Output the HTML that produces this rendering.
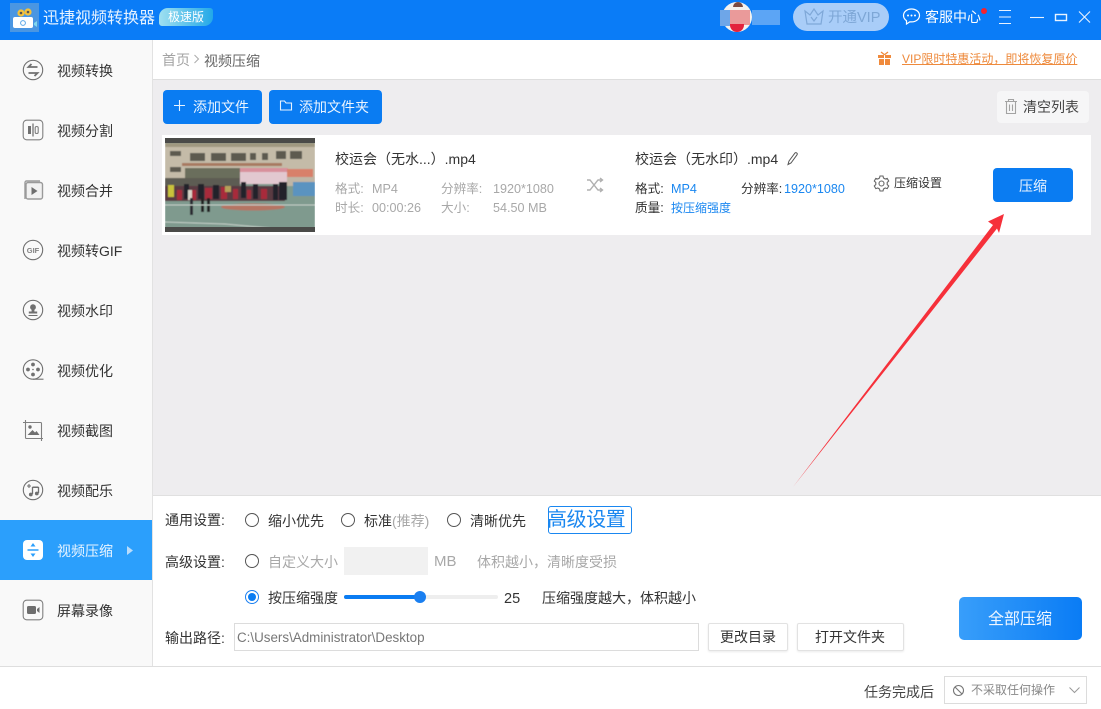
<!DOCTYPE html>
<html lang="zh"><head><meta charset="utf-8"><title>迅捷视频转换器</title>
<style>
html,body{margin:0;padding:0;background:#fff}
#r{position:relative;width:1101px;height:709px;overflow:hidden;background:#fff;font-family:"Liberation Sans","Noto Sans CJK SC",sans-serif;font-size:14px;color:#333}
#r div,#r span.t,#r svg{position:absolute}
.t{position:absolute;white-space:nowrap;line-height:18px}
.g{color:#a8a8a8}.b{color:#1a87f0}
.m{font-size:12.6px}
.nav{left:57px;color:#333}
.btn{background:#0a7cf2;border-radius:4px;color:#fff}
.wb{background:#fff;border:1px solid #e2e2e2;border-radius:2px;box-shadow:0 1px 2px rgba(0,0,0,.08);box-sizing:border-box}
.rad{width:14px;height:14px;border:1.3px solid #555;border-radius:50%;box-sizing:border-box;background:#fff}
</style></head><body><div id="r">

<!-- title bar -->
<div style="left:0;top:0;width:1101px;height:40px;background:#0a7cf7"></div>
<div style="left:10px;top:3px;width:29px;height:29px;background:#4a96e2"></div>
<svg style="left:10px;top:3px" width="30" height="30" viewBox="0 0 30 30"><circle cx="11" cy="10" r="3.6" fill="#f4c23c"/><circle cx="18" cy="9" r="3.6" fill="#f4c23c"/><circle cx="11" cy="10" r="1.3" fill="#555"/><circle cx="18" cy="9" r="1.3" fill="#555"/><rect x="3" y="14" width="20" height="11" rx="2" fill="#fff"/><path d="M24 20l3-2v6l-3-2z" fill="#7fd6ee"/><circle cx="13" cy="20" r="2.4" fill="none" stroke="#5aa7e8"/></svg>
<span class="t" style="left:43px;top:8px;font-size:16px;line-height:22px;color:#e6f2ff">迅捷视频转换器</span>
<div style="left:159px;top:8px;width:54px;height:18px;border-radius:9px 3px 9px 3px;background:linear-gradient(90deg,#9fe0f0,#23a8e8)"></div>
<span class="t" style="left:168px;top:8px;font-size:12px;line-height:18px;color:#fff">极速版</span>

<div style="left:722px;top:2px;width:30px;height:30px;border-radius:50%;background:#f4f2ef;overflow:hidden"></div>
<div style="left:730px;top:10px;width:20px;height:15px;background:#ea9a9a"></div>
<div style="left:730px;top:24px;width:14px;height:8px;background:#e3223c;border-radius:0 0 8px 8px"></div>
<div style="left:733px;top:2px;width:10px;height:5px;background:#7a4a42;border-radius:5px 5px 0 0"></div>
<div style="left:720px;top:10px;width:10px;height:16px;background:#6ea6e8"></div>
<div style="left:752px;top:10px;width:28px;height:15px;background:#5ca5f5"></div>

<div style="left:793px;top:3px;width:96px;height:28px;border-radius:14px;background:#a9cdf8"></div>
<svg style="left:803px;top:7px" width="22" height="20" viewBox="0 0 22 20"><path d="M2 4l5 4 4-6 4 6 5-4-2 13H4zM8 10l3 4 3-4" fill="none" stroke="#7fa8d8" stroke-width="1.2"/></svg>
<span class="t" style="left:828px;top:9px;font-size:14.5px;color:#7ea7d6">开通VIP</span>

<svg style="left:902px;top:7px" width="19" height="19" viewBox="0 0 19 19"><path d="M9.5 2C5 2 1.500 4.800 1.500 8.500c0 2.200 1.200 4 3 5.200V17l3.400-2.200c.5.1 1 .1 1.600.1 4.500 0 8-2.800 8-6.400S14 2 9.500 2z" fill="none" stroke="#fff" stroke-width="1.2"/><circle cx="6" cy="8.500" r="1" fill="#fff"/><circle cx="9.500" cy="8.500" r="1" fill="#fff"/><circle cx="13" cy="8.500" r="1" fill="#fff"/></svg>
<span class="t" style="left:925px;top:8px;color:#fff">客服中心</span>
<div style="left:981px;top:8px;width:6px;height:6px;border-radius:50%;background:#f5222d"></div>
<svg style="left:995px;top:8px" width="106" height="20" viewBox="0 0 106 20" fill="none" stroke="#e8f2ff" stroke-width="1.1"><path d="M4 2.500h12M4 9h12M4 15.500h12"/><path d="M35 9.500h14"/><rect x="60.500" y="6.500" width="11" height="6" stroke-width="1.400"/><path d="M84 3.500l11 11M95 3.500l-11 11"/></svg>

<!-- sidebar -->
<div style="left:0;top:40px;width:152px;height:626px;background:#f9f9f9"></div>
<div style="left:152px;top:40px;width:1px;height:626px;background:#e2e2e2"></div>

<svg style="left:22px;top:59px" width="22" height="22" viewBox="0 0 22 22" fill="none" stroke="#707070" stroke-width="1.1"><circle cx="11" cy="11" r="9.700"/><path d="M15.500 8H6.500l3-3M6.500 14h9l-3 3" stroke-width="1.800"/></svg>
<span class="t nav" style="top:62px">视频转换</span>

<svg style="left:22px;top:119px" width="22" height="22" viewBox="0 0 22 22" fill="none" stroke="#808080" stroke-width="1.1"><rect x="1.200" y="1.200" width="19.600" height="19.600" rx="3.500"/><rect x="6" y="7" width="3" height="8" fill="#707070" stroke="none"/><path d="M11 4.500v13" stroke-width="1.400"/><rect x="13.200" y="7.500" width="3" height="7" rx="1.400"/></svg>
<span class="t nav" style="top:122px">视频分割</span>

<svg style="left:22px;top:179px" width="22" height="22" viewBox="0 0 22 22" fill="none" stroke="#9a9a9a" stroke-width="1.4"><path d="M3 20V3.500A1.500 1.500 0 0 1 4.500 2H18"/><rect x="4" y="3.500" width="16.500" height="16.500" rx="2" fill="#f1f1f1"/><path d="M9.500 8l6 4-6 4z" fill="#6e6e6e" stroke="none"/></svg>
<span class="t nav" style="top:182px">视频合并</span>

<svg style="left:22px;top:239px" width="22" height="22" viewBox="0 0 22 22" fill="none" stroke="#707070" stroke-width="1.1"><circle cx="11" cy="11" r="9.700"/><text x="11" y="14" text-anchor="middle" font-family="Liberation Sans" font-weight="700" font-size="7.500" fill="#808080" stroke="none">GIF</text></svg>
<span class="t nav" style="top:242px">视频转GIF</span>

<svg style="left:22px;top:299px" width="22" height="22" viewBox="0 0 22 22" fill="none" stroke="#707070" stroke-width="1.1"><circle cx="11" cy="11" r="9.700"/><circle cx="11" cy="8.200" r="2.900" fill="#707070" stroke="none"/><path d="M9.600 10h2.800v2.500h2.800v2H6.800v-2h2.800zM6.500 16h9v1h-9z" fill="#707070" stroke="none"/></svg>
<span class="t nav" style="top:302px">视频水印</span>

<svg style="left:22px;top:359px" width="22" height="22" viewBox="0 0 22 22" fill="none" stroke="#707070" stroke-width="1.1"><circle cx="11" cy="10.500" r="9.700"/><path d="M11 20.200h10.500"/><g fill="#707070" stroke="none"><circle cx="11" cy="5.500" r="1.900"/><circle cx="11" cy="15.500" r="1.900"/><circle cx="6" cy="10.500" r="1.900"/><circle cx="16" cy="10.500" r="1.900"/><circle cx="11" cy="10.500" r=".8"/></g></svg>
<span class="t nav" style="top:362px">视频优化</span>

<svg style="left:22px;top:419px" width="22" height="22" viewBox="0 0 22 22" fill="none" stroke="#808080" stroke-width="1.1"><path d="M3.500 1v17.500a1 1 0 0 0 1 1H21M1 3.500h17.500a1 1 0 0 1 1 1V22"/><circle cx="8" cy="8" r="1.700" fill="#707070" stroke="none"/><path d="M5.500 16l5-5 2.500 2.500 1.500-1.500 3 4z" fill="#707070" stroke="none"/></svg>
<span class="t nav" style="top:422px">视频截图</span>

<svg style="left:22px;top:479px" width="22" height="22" viewBox="0 0 22 22" fill="none" stroke="#707070" stroke-width="1.1"><circle cx="11" cy="11" r="9.700"/><path d="M5 7h4M7 5v4"/><path d="M10.500 7.500h6V9h-6z" fill="#707070" stroke="none"/><path d="M10.500 8v7M16.500 8v6" stroke-width="1.300"/><circle cx="8.800" cy="15.500" r="1.900" fill="#707070" stroke="none"/><circle cx="14.800" cy="14.500" r="1.900" fill="#707070" stroke="none"/></svg>
<span class="t nav" style="top:482px">视频配乐</span>

<div style="left:0;top:520px;width:152px;height:60px;background:#2b9ffc"></div>
<div style="left:23px;top:540px;width:20px;height:20px;background:#fff;border-radius:4px"></div>
<svg style="left:23px;top:540px" width="20" height="20" viewBox="0 0 20 20" fill="#2b9ffc"><path d="M10 3l2.500 3.500h-5zM10 17l2.500-3.500h-5zM4.500 9.200h11v1.500h-11z"/></svg>
<span class="t nav" style="top:542px;color:#eaf5ff">视频压缩</span>
<svg style="left:126px;top:545px" width="8" height="11" viewBox="0 0 8 11"><path d="M1 1l6 4.500-6 4.500z" fill="#b9dcfb"/></svg>

<svg style="left:22px;top:599px" width="22" height="22" viewBox="0 0 22 22" fill="none" stroke="#808080" stroke-width="1.1"><rect x="1.200" y="1.200" width="19.600" height="19.600" rx="3.500"/><rect x="5" y="7" width="9" height="8" rx="1.500" fill="#6e6e6e" stroke="none"/><path d="M15 10l2.500-2v6L15 12z" fill="#6e6e6e" stroke="none"/></svg>
<span class="t nav" style="top:602px">屏幕录像</span>

<!-- breadcrumb -->
<div style="left:153px;top:40px;width:948px;height:39px;background:#fff"></div>
<div style="left:153px;top:79px;width:948px;height:1px;background:#dedede"></div>
<span class="t" style="left:162px;top:51px;color:#a3a3a3">首页</span>
<svg style="left:193px;top:54px" width="7" height="10" viewBox="0 0 7 10"><path d="M1.500 1l4 4-4 4" fill="none" stroke="#aaa"/></svg>
<span class="t" style="left:204px;top:52px;color:#666">视频压缩</span>
<svg style="left:877px;top:51px" width="15" height="15" viewBox="0 0 15 15" fill="#f08a3c"><path d="M1 4h6v3H1zM8 4h6v3H8zM2 8h5v6H2zM8 8h5v6H8z"/><path d="M4 1l3.500 2.800M11 1L7.500 3.800" stroke="#f08a3c" stroke-width="1.3"/></svg>
<span class="t" style="left:902px;top:50px;font-size:12px;color:#ee8a3c;text-decoration:underline">VIP限时特惠活动，即将恢复原价</span>

<!-- main area -->
<div style="left:153px;top:80px;width:948px;height:416px;background:#eeedef"></div>
<div style="left:153px;top:495px;width:948px;height:1px;background:#e0e0e0"></div>
<div class="btn" style="left:163px;top:90px;width:99px;height:34px"></div>
<svg style="left:173px;top:99px" width="13" height="13" viewBox="0 0 13 13"><path d="M6.500 1v11M1 6.500h11" stroke="#e6f2ff" stroke-width="1.1"/></svg>
<span class="t" style="left:193px;top:98px;color:#eaf4ff">添加文件</span>
<div class="btn" style="left:269px;top:90px;width:113px;height:34px"></div>
<svg style="left:279px;top:99px" width="14" height="13" viewBox="0 0 14 13"><path d="M1.500 11V2h4l1.500 2h5.500v7z" fill="none" stroke="#e6f2ff" stroke-width="1.1"/></svg>
<span class="t" style="left:299px;top:98px;color:#eaf4ff">添加文件夹</span>
<div style="left:997px;top:91px;width:92px;height:32px;background:#f6f6f7;border-radius:4px"></div>
<svg style="left:1004px;top:98px" width="14" height="17" viewBox="0 0 14 17" fill="none" stroke="#a3a3a3" stroke-width="1.1"><path d="M1 3.500h12M4.500 3.500v-2h5v2M2.500 3.500v12h9v-12M5.500 6.500V13M8.500 6.500V13"/></svg>
<span class="t" style="left:1023px;top:98px;color:#444">清空列表</span>

<!-- card -->
<div style="left:162px;top:135px;width:929px;height:100px;background:#fff"></div>
<svg style="left:165px;top:138px" width="150" height="94" viewBox="0 0 150 94">
<defs><filter id="bl" x="0" y="0" width="100%" height="100%"><feGaussianBlur stdDeviation=".55"/></filter></defs>
<g filter="url(#bl)">
<rect width="150" height="94" fill="#7f9a8e"/>
<rect y="5" width="150" height="36" fill="#c4bba8"/>
<rect y="5" width="150" height="4" fill="#a09880"/>
<g fill="#5d5a50"><rect x="5" y="13" width="11" height="5"/><rect x="25" y="15" width="15" height="8"/><rect x="46" y="15" width="15" height="8"/><rect x="66" y="15" width="15" height="8"/><rect x="85" y="15" width="6" height="7"/><rect x="97" y="15" width="6" height="7"/><rect x="111" y="13" width="10" height="8"/><rect x="125" y="13" width="12" height="8"/><rect x="5" y="29" width="11" height="5"/></g>
<rect x="17" y="25" width="100" height="3" fill="#a87a60"/>
<rect x="20" y="30" width="55" height="12" fill="#6a6e5c"/>
<rect x="0" y="40" width="75" height="10" fill="#5d5c52"/>
<rect x="75" y="31" width="48" height="15" fill="#e2c8d0"/>
<rect x="75" y="30" width="48" height="4" fill="#d8909c"/>
<rect x="122" y="31" width="26" height="8" fill="#d8806a"/>
<rect x="122" y="39" width="28" height="9" fill="#bfb5a5"/>
<rect x="128" y="44" width="22" height="14" fill="#5a93c0"/>
<rect x="0" y="48" width="120" height="15" fill="#5a3a42"/>
<g fill="#a82a3a"><rect x="12" y="52" width="5" height="10"/><rect x="26" y="52" width="5" height="10"/><rect x="40" y="50" width="7" height="11"/><rect x="56" y="49" width="6" height="12"/><rect x="68" y="51" width="5" height="10"/><rect x="82" y="52" width="4" height="9"/><rect x="96" y="51" width="6" height="10"/></g>
<g fill="#24242a"><rect x="19" y="46" width="5" height="15"/><rect x="33" y="46" width="6" height="15"/><rect x="48" y="47" width="6" height="14"/><rect x="76" y="44" width="5" height="16"/><rect x="88" y="46" width="5" height="15"/><rect x="108" y="46" width="5" height="16"/><rect x="114" y="44" width="8" height="18"/></g>
<rect x="3" y="47" width="6" height="12" fill="#c9c23a"/>
<rect x="60" y="48" width="6" height="6" fill="#b5a05a"/>
<rect x="23" y="52" width="4" height="10" fill="#d8d4c8"/>
<rect x="25" y="60" width="3" height="17" fill="#2a2a30"/>
<rect x="42" y="60" width="3" height="14" fill="#222"/>
<rect x="36" y="60" width="3" height="14" fill="#222"/>
<ellipse cx="88" cy="69" rx="32" ry="3.500" fill="#b57463"/>
<path d="M0 84l60 2 45 4M0 67h150" stroke="#c6d0c9" fill="none"/>
</g>
<rect y="0" width="150" height="5" fill="#4a4a48"/>
<rect y="89" width="150" height="5" fill="#4a4a48"/>
</svg>
<span class="t" style="left:335px;top:150px">校运会（无水...）.mp4</span>
<span class="t g m" style="left:335px;top:180px">格式:</span>
<span class="t g m" style="left:372px;top:180px">MP4</span>
<span class="t g m" style="left:441px;top:180px">分辨率:</span>
<span class="t g m" style="left:493px;top:180px">1920*1080</span>
<span class="t g m" style="left:335px;top:199px">时长:</span>
<span class="t g m" style="left:372px;top:199px">00:00:26</span>
<span class="t g m" style="left:441px;top:199px">大小:</span>
<span class="t g m" style="left:493px;top:199px">54.50 MB</span>
<svg style="left:586px;top:177px" width="18" height="16" viewBox="0 0 18 16" fill="none" stroke="#b0b0b0" stroke-width="1.4"><path d="M1 3h3l8 10h4M1 13h3l8-10h4M14 1l2.500 2L14 5M14 11l2.500 2-2.500 2"/></svg>
<span class="t" style="left:635px;top:150px">校运会（无水印）.mp4</span>
<svg style="left:786px;top:151px" width="13" height="15" viewBox="0 0 13 15" fill="none" stroke="#555"><path d="M3 10l6-8c1-1 3 .3 2 1.800L5 12l-3 1.500z"/></svg>
<span class="t m" style="left:635px;top:180px">格式:</span>
<span class="t b m" style="left:671px;top:180px">MP4</span>
<span class="t m" style="left:741px;top:180px">分辨率:</span>
<span class="t b m" style="left:784px;top:180px">1920*1080</span>
<span class="t m" style="left:635px;top:199px">质量:</span>
<span class="t b" style="left:671px;top:199px;font-size:12px">按压缩强度</span>
<svg style="left:873px;top:175px" width="17" height="17" viewBox="0 0 17 17" fill="none" stroke="#666" stroke-width="1.1"><path d="M7 1.500h3l.5 2 1.700 1 2-.6 1.500 2.600-1.500 1.500v2l1.500 1.500-1.500 2.600-2-.6-1.700 1-.5 2H7l-.5-2-1.700-1-2 .6-1.500-2.600 1.500-1.500v-2L1.300 6.500l1.500-2.600 2 .6 1.700-1z" transform="translate(0 -.5)"/><circle cx="8.500" cy="8.500" r="2.500"/></svg>
<span class="t" style="left:894px;top:174px;font-size:12px">压缩设置</span>
<div class="btn" style="left:993px;top:168px;width:80px;height:34px"></div>
<span class="t" style="left:1019px;top:177px;color:#eaf4ff">压缩</span>

<!-- bottom panel -->
<span class="t" style="left:165px;top:511px">通用设置:</span>
<div class="rad" style="left:245px;top:513px"></div>
<span class="t" style="left:268px;top:512px">缩小优先</span>
<div class="rad" style="left:341px;top:513px"></div>
<span class="t" style="left:364px;top:512px">标准<span style="color:#a8a8a8">(推荐)</span></span>
<div class="rad" style="left:447px;top:513px"></div>
<span class="t" style="left:470px;top:512px">清晰优先</span>
<div style="left:548px;top:506px;width:84px;height:28px;box-sizing:border-box;border:1px solid #1a87f0;border-radius:3px"></div>
<span class="t" style="left:547px;top:507px;font-size:20px;line-height:26px;letter-spacing:-.4px;color:#1a87f0">高级设置</span>

<span class="t" style="left:165px;top:553px">高级设置:</span>
<div class="rad" style="left:245px;top:554px"></div>
<span class="t g" style="left:268px;top:553px">自定义大小</span>
<div style="left:344px;top:547px;width:84px;height:28px;background:#f1f1f1"></div>
<span class="t g" style="left:434px;top:553px;font-size:15px">MB</span>
<span class="t g" style="left:477px;top:553px">体积越小，清晰度受损</span>

<div style="left:245px;top:590px;width:14px;height:14px;box-sizing:border-box;border:1px solid #1a7ff0;border-radius:50%;background:#fff"></div>
<div style="left:248px;top:593px;width:8px;height:8px;border-radius:50%;background:#0a7cf2"></div>
<span class="t" style="left:268px;top:589px">按压缩强度</span>
<div style="left:344px;top:595px;width:154px;height:4px;background:#eee;border-radius:2px"></div>
<div style="left:344px;top:595px;width:76px;height:4px;background:#0a7cf2;border-radius:2px"></div>
<div style="left:414px;top:591px;width:12px;height:12px;background:#1a7ff0;border-radius:50%"></div>
<span class="t" style="left:504px;top:590px;font-size:14.500px">25</span>
<span class="t" style="left:542px;top:589px">压缩强度越大，体积越小</span>

<span class="t" style="left:165px;top:629px">输出路径:</span>
<div style="left:234px;top:623px;width:465px;height:28px;box-sizing:border-box;border:1px solid #dcdcdc;background:#fff"></div>
<span class="t" style="left:237px;top:629px;font-size:13.400px;color:#777">C:\Users\Administrator\Desktop</span>
<div class="wb" style="left:708px;top:623px;width:80px;height:28px"></div>
<span class="t" style="left:720px;top:628px">更改目录</span>
<div class="wb" style="left:797px;top:623px;width:107px;height:28px"></div>
<span class="t" style="left:815px;top:628px">打开文件夹</span>
<div style="left:959px;top:597px;width:123px;height:43px;border-radius:5px;background:linear-gradient(90deg,#389efa,#0a7cf5)"></div>
<span class="t" style="left:988px;top:610px;font-size:16px;line-height:20px;color:#eef6ff">全部压缩</span>

<div style="left:0;top:666px;width:1101px;height:1px;background:#dedede"></div>
<span class="t" style="left:864px;top:683px;color:#444">任务完成后</span>
<div style="left:944px;top:676px;width:143px;height:28px;box-sizing:border-box;border:1px solid #dcdcdc;background:#fff"></div>
<svg style="left:952px;top:684px" width="13" height="13" viewBox="0 0 13 13" fill="none" stroke="#777" stroke-width="1.1"><circle cx="6.500" cy="6.500" r="5"/><path d="M3 3l7 7"/></svg>
<span class="t" style="left:971px;top:681px;font-size:12px;color:#888">不采取任何操作</span>
<svg style="left:1068px;top:686px" width="13" height="9" viewBox="0 0 13 9"><path d="M1.500 1.500l5 5 5-5" fill="none" stroke="#999"/></svg>

<!-- red arrow -->
<svg style="left:0;top:0" width="1101" height="709" viewBox="0 0 1101 709"><path d="M1004 214L988 221.500 993 225 793 487 997 228.500 999 233z" fill="#f6303a"/></svg>
</div></body></html>
